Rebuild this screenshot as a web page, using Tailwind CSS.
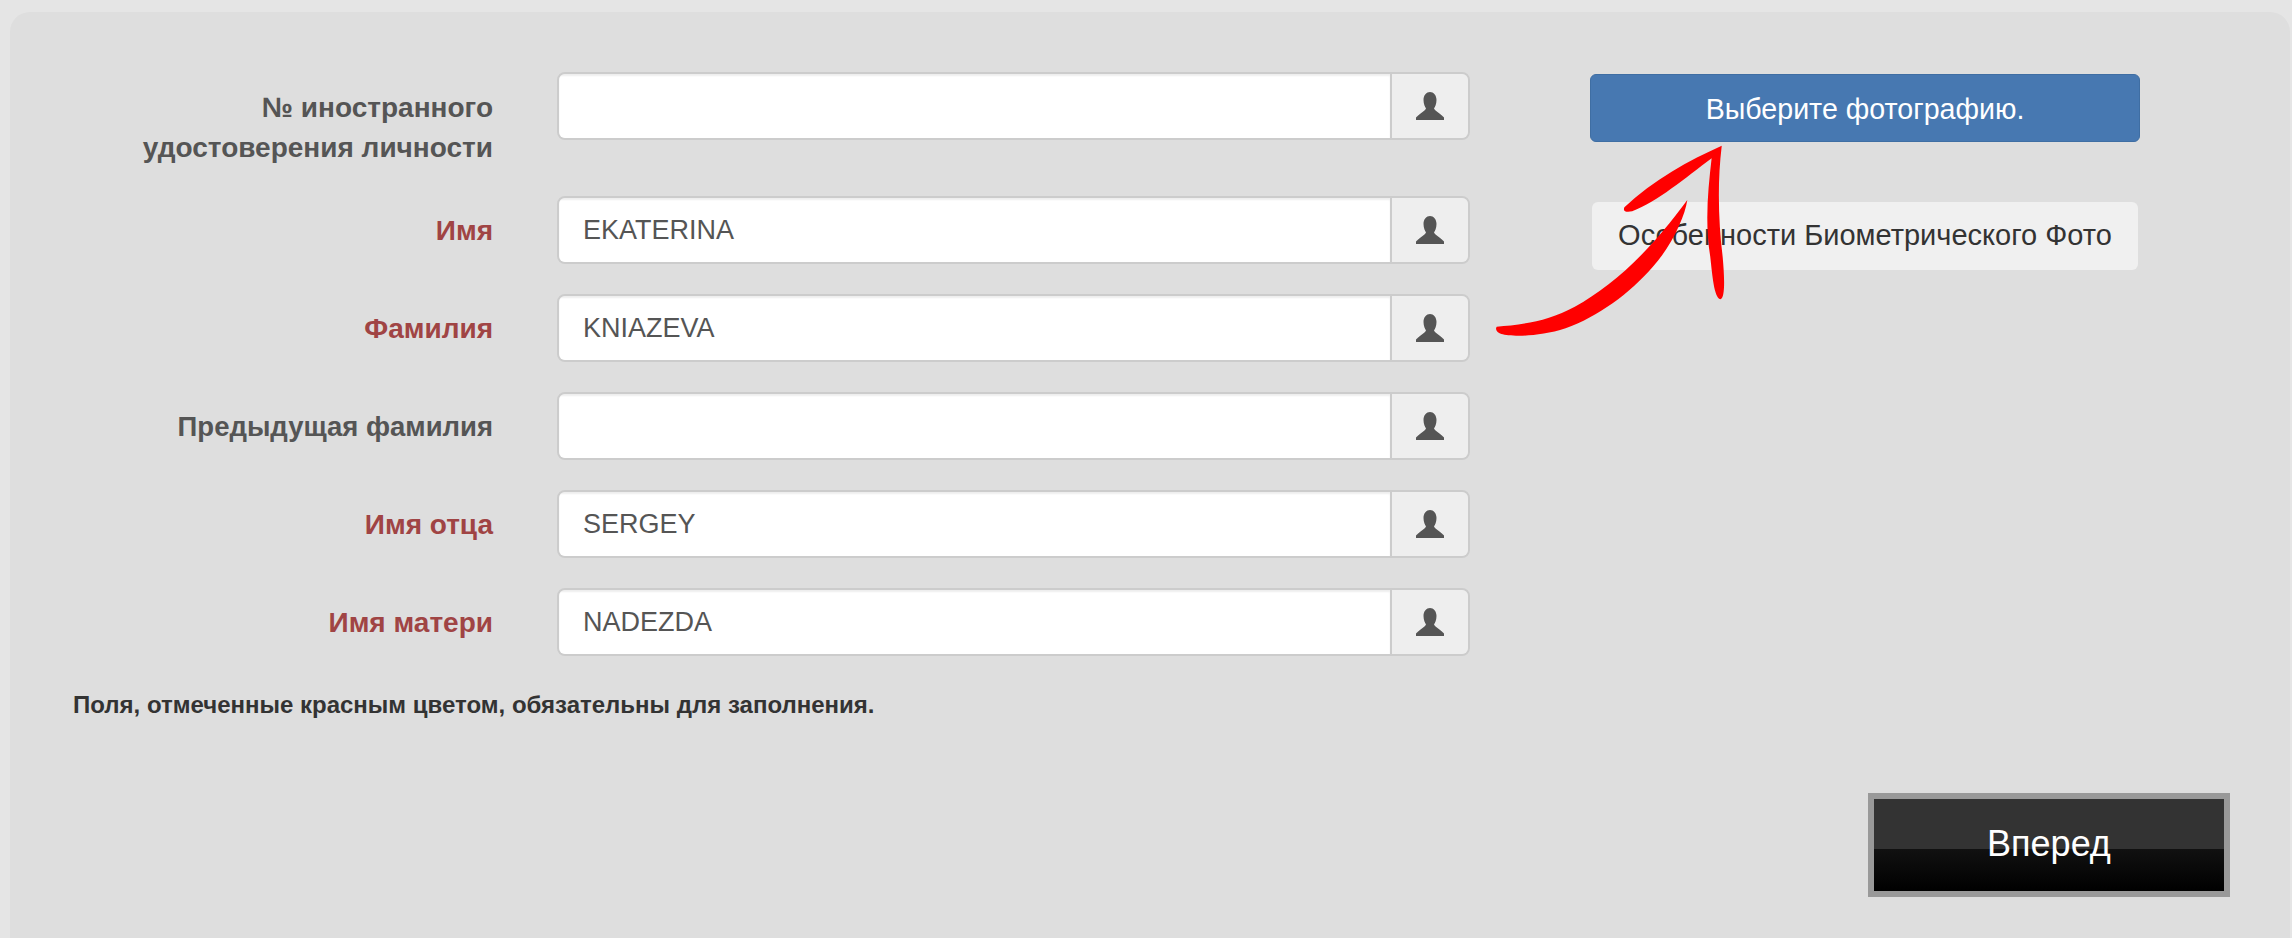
<!DOCTYPE html>
<html lang="ru">
<head>
    <meta charset="UTF-8">
    <title>Форма заявки</title>
    <script src="https://cdn.jsdelivr.net/npm/@tailwindcss/browser@4"></script>
</head>
<body class="h-[938px] overflow-hidden bg-[#e5e5e5] font-['Liberation_Sans',Arial,sans-serif]">

    <!-- Main panel -->
    <main class="ml-[10px] mr-[2px] mt-[12px] h-[926px] rounded-t-[20px] bg-[#dedede] pl-[64px] pr-[60px] pt-[60px]">
        <div class="flex">

            <!-- Form fields -->
            <form class="w-[1396px]">
                <div class="mb-[32px] flex h-[92px] items-start gap-[64px]">
                    <label class="w-[419px] pt-[16px] text-right text-[28px] font-bold leading-[40px] text-[#555]">№ иностранного<br>удостоверения личности</label>
                    <div class="flex h-[68px] w-[913px] overflow-hidden rounded-[8px] border-2 border-[#ccc]">
                        <input type="text" value="" class="min-w-0 flex-1 bg-white px-[24px] text-[27px] text-[#555] shadow-[inset_0_2px_2px_rgba(0,0,0,0.07)] outline-none">
                        <span class="flex w-[78px] items-center justify-center border-l-2 border-[#ccc] bg-[#eee]">
                            <svg class="h-[28px] w-[28px]" viewBox="0 0 28 28" fill="#555"><path d="M14 0C10.5 0 7.5 3 7.5 8C7.5 12 9 15 10 16.5L9 18C7 20 3 22 0 25.5L0 28L28 28L28 25.5C25 22 21 20 19 18L18 16.5C19 15 20.5 12 20.5 8C20.5 3 17.5 0 14 0Z"/></svg>
                        </span>
                    </div>
                </div>

                <div class="mb-[30px] flex h-[68px] items-center gap-[64px]">
                    <label class="w-[419px] pt-[2px] text-right text-[28px] font-bold leading-[40px] text-[#a04444]">Имя</label>
                    <div class="flex h-[68px] w-[913px] overflow-hidden rounded-[8px] border-2 border-[#ccc]">
                        <input type="text" value="EKATERINA" class="min-w-0 flex-1 bg-white px-[24px] text-[27px] text-[#555] shadow-[inset_0_2px_2px_rgba(0,0,0,0.07)] outline-none">
                        <span class="flex w-[78px] items-center justify-center border-l-2 border-[#ccc] bg-[#eee]">
                            <svg class="h-[28px] w-[28px]" viewBox="0 0 28 28" fill="#555"><path d="M14 0C10.5 0 7.5 3 7.5 8C7.5 12 9 15 10 16.5L9 18C7 20 3 22 0 25.5L0 28L28 28L28 25.5C25 22 21 20 19 18L18 16.5C19 15 20.5 12 20.5 8C20.5 3 17.5 0 14 0Z"/></svg>
                        </span>
                    </div>
                </div>

                <div class="mb-[30px] flex h-[68px] items-center gap-[64px]">
                    <label class="w-[419px] pt-[2px] text-right text-[28px] font-bold leading-[40px] text-[#a04444]">Фамилия</label>
                    <div class="flex h-[68px] w-[913px] overflow-hidden rounded-[8px] border-2 border-[#ccc]">
                        <input type="text" value="KNIAZEVA" class="min-w-0 flex-1 bg-white px-[24px] text-[27px] text-[#555] shadow-[inset_0_2px_2px_rgba(0,0,0,0.07)] outline-none">
                        <span class="flex w-[78px] items-center justify-center border-l-2 border-[#ccc] bg-[#eee]">
                            <svg class="h-[28px] w-[28px]" viewBox="0 0 28 28" fill="#555"><path d="M14 0C10.5 0 7.5 3 7.5 8C7.5 12 9 15 10 16.5L9 18C7 20 3 22 0 25.5L0 28L28 28L28 25.5C25 22 21 20 19 18L18 16.5C19 15 20.5 12 20.5 8C20.5 3 17.5 0 14 0Z"/></svg>
                        </span>
                    </div>
                </div>

                <div class="mb-[30px] flex h-[68px] items-center gap-[64px]">
                    <label class="w-[419px] pt-[2px] text-right text-[27.5px] font-bold leading-[40px] text-[#555]">Предыдущая фамилия</label>
                    <div class="flex h-[68px] w-[913px] overflow-hidden rounded-[8px] border-2 border-[#ccc]">
                        <input type="text" value="" class="min-w-0 flex-1 bg-white px-[24px] text-[27px] text-[#555] shadow-[inset_0_2px_2px_rgba(0,0,0,0.07)] outline-none">
                        <span class="flex w-[78px] items-center justify-center border-l-2 border-[#ccc] bg-[#eee]">
                            <svg class="h-[28px] w-[28px]" viewBox="0 0 28 28" fill="#555"><path d="M14 0C10.5 0 7.5 3 7.5 8C7.5 12 9 15 10 16.5L9 18C7 20 3 22 0 25.5L0 28L28 28L28 25.5C25 22 21 20 19 18L18 16.5C19 15 20.5 12 20.5 8C20.5 3 17.5 0 14 0Z"/></svg>
                        </span>
                    </div>
                </div>

                <div class="mb-[30px] flex h-[68px] items-center gap-[64px]">
                    <label class="w-[419px] pt-[2px] text-right text-[28px] font-bold leading-[40px] text-[#a04444]">Имя отца</label>
                    <div class="flex h-[68px] w-[913px] overflow-hidden rounded-[8px] border-2 border-[#ccc]">
                        <input type="text" value="SERGEY" class="min-w-0 flex-1 bg-white px-[24px] text-[27px] text-[#555] shadow-[inset_0_2px_2px_rgba(0,0,0,0.07)] outline-none">
                        <span class="flex w-[78px] items-center justify-center border-l-2 border-[#ccc] bg-[#eee]">
                            <svg class="h-[28px] w-[28px]" viewBox="0 0 28 28" fill="#555"><path d="M14 0C10.5 0 7.5 3 7.5 8C7.5 12 9 15 10 16.5L9 18C7 20 3 22 0 25.5L0 28L28 28L28 25.5C25 22 21 20 19 18L18 16.5C19 15 20.5 12 20.5 8C20.5 3 17.5 0 14 0Z"/></svg>
                        </span>
                    </div>
                </div>

                <div class="flex h-[68px] items-center gap-[64px]">
                    <label class="w-[419px] pt-[2px] text-right text-[28px] font-bold leading-[40px] text-[#a04444]">Имя матери</label>
                    <div class="flex h-[68px] w-[913px] overflow-hidden rounded-[8px] border-2 border-[#ccc]">
                        <input type="text" value="NADEZDA" class="min-w-0 flex-1 bg-white px-[24px] text-[27px] text-[#555] shadow-[inset_0_2px_2px_rgba(0,0,0,0.07)] outline-none">
                        <span class="flex w-[78px] items-center justify-center border-l-2 border-[#ccc] bg-[#eee]">
                            <svg class="h-[28px] w-[28px]" viewBox="0 0 28 28" fill="#555"><path d="M14 0C10.5 0 7.5 3 7.5 8C7.5 12 9 15 10 16.5L9 18C7 20 3 22 0 25.5L0 28L28 28L28 25.5C25 22 21 20 19 18L18 16.5C19 15 20.5 12 20.5 8C20.5 3 17.5 0 14 0Z"/></svg>
                        </span>
                    </div>
                </div>

                <p class="mt-[34px] -ml-px text-[24px] font-bold leading-[30px] text-[#333]">Поля, отмеченные красным цветом, обязательны для заполнения.</p>
            </form>

            <!-- Photo buttons -->
            <div class="ml-[120px] w-[550px] pt-[2px]">
                <button class="h-[68px] w-full rounded-[6px] border border-[#3f6ea3] bg-[#4778b1] pt-[3px] text-[28.6px] text-white">Выберите фотографию.</button>
                <div class="mx-[2px] mt-[60px] flex h-[68px] items-center justify-center rounded-[6px] bg-[#f0f0f0] text-[29px] text-[#333]">Особенности Биометрического Фото</div>
            </div>
        </div>

        <!-- Next button -->
        <div class="mt-[73px] flex justify-end">
            <button class="h-[104px] w-[362px] border-[6px] border-[#999] bg-[linear-gradient(#333_0,#333_50px,#111_50px,#000_100%)] pb-[2px] text-[36px] text-white">Вперед</button>
        </div>
    </main>

    <!-- Hand-drawn red arrow over the form -->
    <svg class="absolute left-[1460px] top-[50px] h-[320px] w-[720px]" viewBox="0 0 1568 960" preserveAspectRatio="none" fill="#f00">
        <path d="M80 830C130 825 190 815 250 770C330 710 410 610 495 450C490 500 460 590 420 650C370 730 300 800 230 835C170 862 110 860 90 852C80 848 76 838 80 830Z"/>
        <path d="M570 287C500 330 420 390 358 472C354 484 362 488 375 484C430 455 490 385 548 325C540 420 533 520 545 620C550 680 553 740 567 748C578 745 576 680 572 620C563 520 560 400 570 287Z"/>
    </svg>
</body>
</html>
